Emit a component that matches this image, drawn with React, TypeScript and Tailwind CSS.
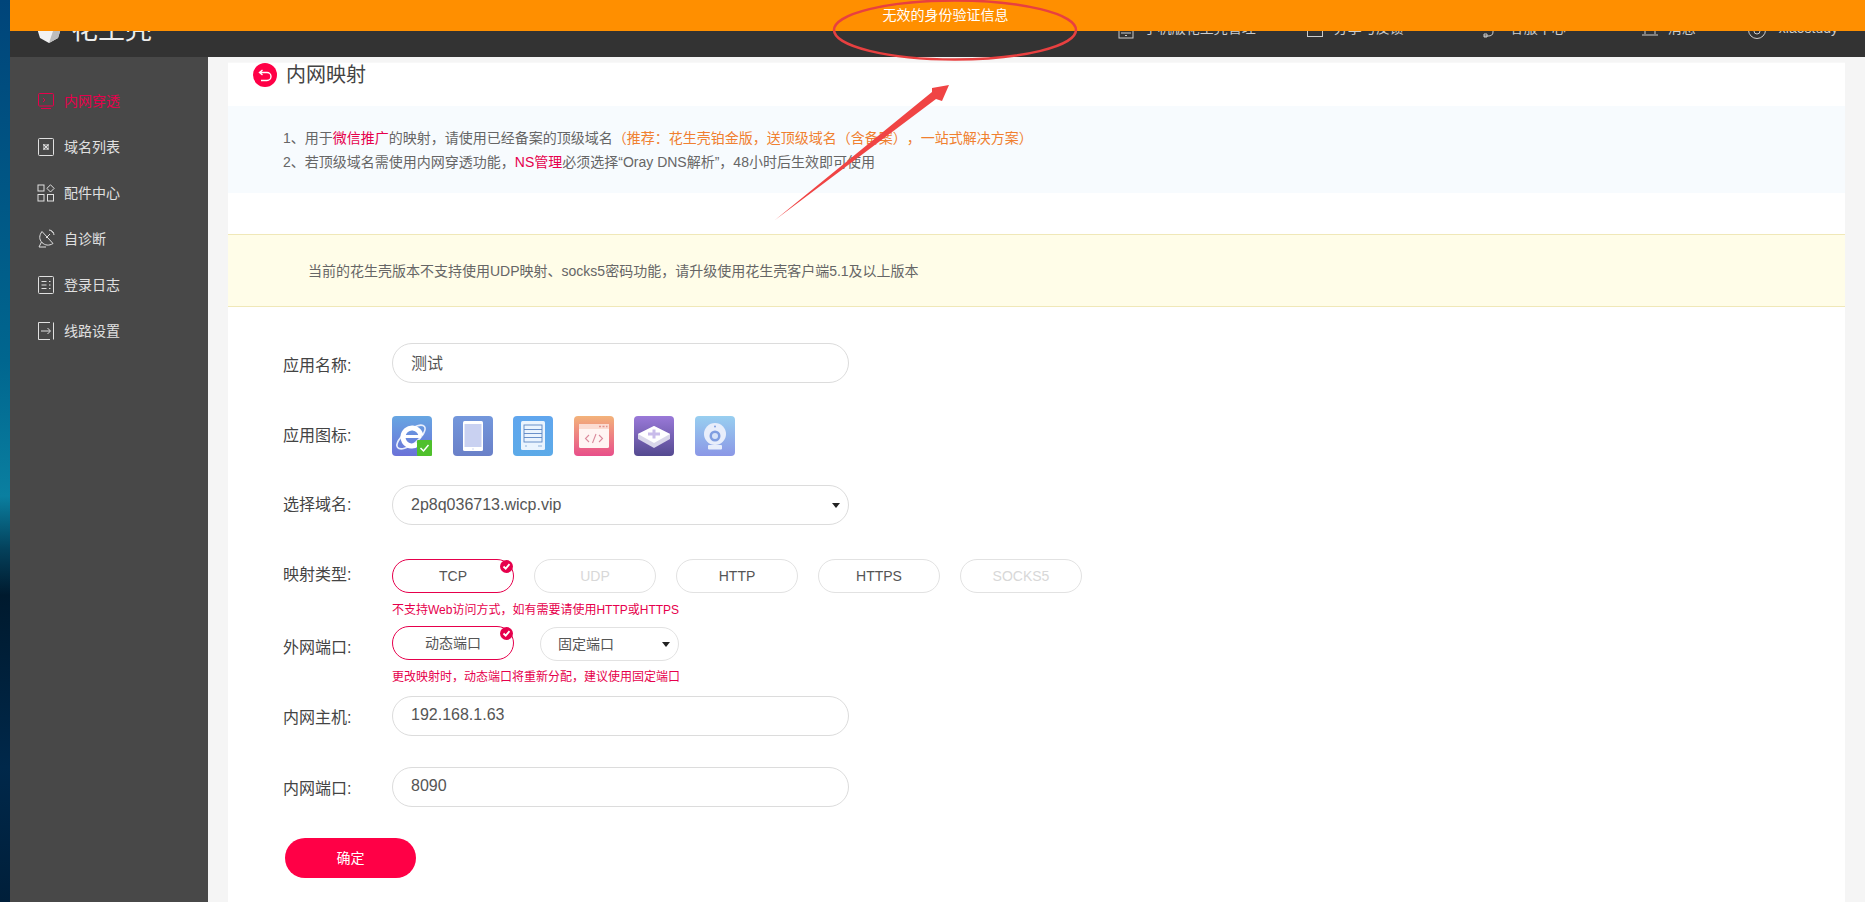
import type { ReactNode } from 'react';

const FONT = "font-['Liberation_Sans','Noto_Sans_CJK_SC',sans-serif]";

function MonitorIcon() {
  return (
    <svg width="18" height="18" viewBox="0 0 18 18" fill="none" stroke="currentColor" strokeWidth="1">
      <rect x="1.500" y="1.500" width="15" height="12.500" rx="1" />
      <path d="M4 16.500h10M6 6l2 2-2 2" />
    </svg>
  );
}
function DomainIcon() {
  return (
    <svg width="18" height="20" viewBox="0 0 18 20" fill="none" stroke="currentColor" strokeWidth="1">
      <rect x="1.500" y="1.500" width="15" height="17" rx="1" />
      <path d="M6.500 7.500l5 5M11.500 7.500l-5 5" strokeWidth="1.200" />
      <rect x="6.500" y="7.500" width="5" height="5" strokeWidth="0.500" />
    </svg>
  );
}
function PartsIcon() {
  return (
    <svg width="18" height="18" viewBox="0 0 18 18" fill="none" stroke="currentColor" strokeWidth="1">
      <rect x="1" y="1" width="6" height="6" />
      <path d="M13.500 0.800l3.600 3.600-3.600 3.600-3.600-3.600z" />
      <rect x="1" y="10.500" width="6" height="6.500" />
      <rect x="10.500" y="10.500" width="6" height="6.500" />
    </svg>
  );
}
function DishIcon() {
  return (
    <svg width="18" height="20" viewBox="0 0 18 20" fill="none" stroke="currentColor" strokeWidth="1">
      <path d="M5 2.500c-3 4-3 8 0 11s7 3.500 11 1z" />
      <path d="M9 9l4-4M14 1.500l2.500 2.500M12 1c2.500 0 5 2.500 5 5" />
      <path d="M4.500 13l-2.500 5h7" />
    </svg>
  );
}
function LogIcon() {
  return (
    <svg width="18" height="20" viewBox="0 0 18 20" fill="none" stroke="currentColor" strokeWidth="1">
      <rect x="1.500" y="1.500" width="15" height="17" rx="1" />
      <path d="M4.500 6.500h5M4.500 10h5M4.500 13.500h5M12 6.500h1.500M12 10h1.500M12 13.500h1.500" />
    </svg>
  );
}
function RouteIcon() {
  return (
    <svg width="18" height="20" viewBox="0 0 18 20" fill="none" stroke="currentColor" strokeWidth="1">
      <path d="M13 1.500H1.500v17H13" />
      <path d="M16.500 1.500v17M4 10h9M10.500 7l3 3-3 3" />
    </svg>
  );
}

function AppIconFrame({ id, from, to, children }: { id: string; from: string; to: string; children: ReactNode }) {
  return (
    <svg width="40" height="40" viewBox="0 0 40 40">
      <defs>
        <linearGradient id={id} x1="0" y1="0" x2="0" y2="1">
          <stop offset="0" stopColor={from} />
          <stop offset="1" stopColor={to} />
        </linearGradient>
      </defs>
      <rect width="40" height="40" rx="4" fill={`url(#${id})`} />
      {children}
    </svg>
  );
}

const appIcons = [
  <AppIconFrame key="ie" id="g1" from="#67a6e2" to="#6b72d8">
    <ellipse cx="19" cy="21" rx="17" ry="7" fill="none" stroke="#e8eefc" strokeWidth="1.600" transform="rotate(-38 19 21)" />
    <circle cx="20" cy="21" r="9" fill="none" stroke="#fff" strokeWidth="5" strokeDasharray="47 9.500" transform="rotate(50 20 21)" />
    <path d="M11 20.500h18" stroke="#fff" strokeWidth="3" />
    <rect x="25" y="24" width="15" height="16" rx="1" fill="#4fc02c" />
    <path d="M28.500 32l3 3 5-6" fill="none" stroke="#fff" strokeWidth="1.500" />
  </AppIconFrame>,
  <AppIconFrame key="pad" id="g2" from="#7397dc" to="#6a80c8">
    <rect x="10" y="5" width="20" height="30" rx="1.500" fill="#fff" />
    <rect x="11.500" y="8" width="17" height="23" fill="#c9d1f1" />
    <circle cx="20" cy="33" r="0.800" fill="#c9d1f1" />
  </AppIconFrame>,
  <AppIconFrame key="list" id="g3" from="#60a6ee" to="#5caae8">
    <rect x="8" y="5" width="24" height="29" rx="1.500" fill="#eaf4fe" />
    <rect x="11" y="9" width="18" height="17" fill="none" stroke="#5b86c4" strokeWidth="0.900" />
    <path d="M11 13.500h18M11 17.500h18M11 21.500h18" stroke="#5b86c4" strokeWidth="0.900" />
    <path d="M12 30h2M25 30h4" stroke="#8fb4dc" strokeWidth="1.200" />
  </AppIconFrame>,
  <AppIconFrame key="code" id="g4" from="#f3b37a" to="#e84f8a">
    <rect x="5" y="8" width="30" height="24" rx="1.500" fill="#fff5f3" />
    <rect x="5" y="8" width="30" height="5" fill="#fbdcd2" />
    <path d="M25 10.500h2M28.500 10.500h2M32 10.500h1.500" stroke="#e2928c" strokeWidth="1.400" />
    <path d="M15 19l-3.500 3.500 3.500 3.500M25 19l3.500 3.500-3.500 3.500M22 18l-3.500 9" fill="none" stroke="#da8a9c" strokeWidth="1.100" />
  </AppIconFrame>,
  <AppIconFrame key="box" id="g5" from="#9a79d9" to="#544a90">
    <path d="M20 10l16 8v5l-16 9-16-9v-5z" fill="#d9d6ea" />
    <path d="M20 10l16 8-16 9-16-9z" fill="#fff" />
    <path d="M20 13.500v9M14 18h12" stroke="#c9bcea" strokeWidth="3" />
  </AppIconFrame>,
  <AppIconFrame key="cam" id="g6" from="#98cff0" to="#8b97e6">
    <circle cx="20" cy="18" r="11" fill="#e8eefb" />
    <circle cx="20" cy="20" r="5.500" fill="#7f9de0" />
    <circle cx="20" cy="20" r="3" fill="#d6e2f8" />
    <circle cx="20" cy="10.500" r="1" fill="#7f9de0" />
    <rect x="13" y="29" width="14" height="4.500" rx="1" fill="#e8eefb" />
  </AppIconFrame>,
];

const menu = [
  { label: '内网穿透', icon: <MonitorIcon />, active: true },
  { label: '域名列表', icon: <DomainIcon /> },
  { label: '配件中心', icon: <PartsIcon /> },
  { label: '自诊断', icon: <DishIcon /> },
  { label: '登录日志', icon: <LogIcon /> },
  { label: '线路设置', icon: <RouteIcon /> },
];

function Label({ children, className = '' }: { children: ReactNode; className?: string }) {
  return <div className={`w-[109px] shrink-0 text-[16px] text-[#444] ${className}`}>{children}</div>;
}

function Field({ value }: { value: string }) {
  return (
    <input
      readOnly
      defaultValue={value}
      className="h-[40px] w-[457px] rounded-full border border-[#dcdcdc] bg-white px-[18px] pb-[2px] text-[16px] text-[#555] outline-none"
    />
  );
}

function Caret() {
  return <span className="h-0 w-0 border-x-[4px] border-t-[5px] border-x-transparent border-t-[#222]" />;
}

function Check() {
  return (
    <span className="absolute right-0 top-0 flex h-[13px] w-[13px] items-center justify-center rounded-full bg-[#e6004c]">
      <svg width="9" height="9" viewBox="0 0 9 9" fill="none" stroke="#fff" strokeWidth="1.800">
        <path d="M1.500 4.500l2.200 2.200 3.800-4.500" />
      </svg>
    </span>
  );
}

function Pill({ text, selected, disabled }: { text: string; selected?: boolean; disabled?: boolean }) {
  return (
    <div
      className={`relative flex h-[34px] w-[122px] items-center justify-center rounded-[17px] border text-[14px] ${
        selected ? 'border-[#e6004c]' : 'border-[#e2e2e2]'
      } ${disabled ? 'text-[#d8d8d8]' : 'text-[#555]'}`}
    >
      {text}
      {selected && <Check />}
    </div>
  );
}

export default function App() {
  return (
    <div className={`relative flex h-[902px] overflow-hidden bg-white [text-spacing-trim:space-all] ${FONT}`}>
      <div className="w-[10px] shrink-0 bg-[linear-gradient(180deg,#00457a_0%,#00668f_40%,#0a7fa0_55%,#04405a_61%,#001a2e_66%,#00284a_85%,#001f3a_100%)]" />

      <div className="flex min-w-0 flex-1 flex-col">
        <header className="flex h-[57px] shrink-0 items-center bg-[#333] pl-[26px] pr-[27px] text-[14px] text-[#ccc]">
          <svg width="26" height="26" viewBox="0 0 26 26" className="mt-[3px]">
            <path d="M0 8l13-8 13 8-4 13-9 5-9-5z" fill="#f2f2f2" />
            <path d="M13 26l9-5 4-13-9 6z" fill="#bdbdbd" />
          </svg>
          <span className="ml-[9px] mt-[3px] text-[27px] leading-none text-[#eee]">花生壳</span>
          <div className="ml-auto flex items-center gap-[7px]">
            <svg width="16" height="18" viewBox="0 0 16 18" fill="none" stroke="currentColor" strokeWidth="1" className="mt-[2px]">
              <rect x="1" y="1" width="14" height="16" />
              <path d="M3 12h10M7 14.500h2" />
            </svg>
            <span className="ml-[3px]">手机版花生壳管理</span>
          </div>
          <div className="ml-[51px] flex items-center gap-[11px]">
            <svg width="16" height="18" viewBox="0 0 16 18" fill="none" stroke="currentColor" strokeWidth="1" className="mt-[1px]">
              <rect x="0.500" y="1" width="15" height="15.500" />
            </svg>
            <span>分享与反馈</span>
          </div>
          <div className="ml-[79px] flex items-center gap-[15px]">
            <svg width="12" height="18" viewBox="0 0 12 18" fill="none" stroke="currentColor" strokeWidth="1" className="mt-[2px]">
              <path d="M10 1v10c0 3-2 4-5 4H1M1 13h3v3H1z" />
            </svg>
            <span>客服中心</span>
          </div>
          <div className="ml-[76px] flex items-center gap-[10px]">
            <svg width="16" height="18" viewBox="0 0 16 18" fill="none" stroke="currentColor" strokeWidth="1" className="mt-[1px]">
              <path d="M3 14V7a5 5 0 0 1 10 0v7M0 15h16" />
            </svg>
            <span>消息</span>
          </div>
          <div className="ml-[52px] flex items-center gap-[13px]">
            <svg width="18" height="18" viewBox="0 0 18 18" fill="none" stroke="currentColor" strokeWidth="1" className="mt-[3px]">
              <circle cx="9" cy="9" r="8.500" />
              <path d="M6 6v4a3 3 0 0 0 6 0V6" />
            </svg>
            <span>xiaostudy</span>
          </div>
        </header>

        <div className="flex min-h-0 flex-1">
          <aside className="w-[198px] shrink-0 bg-[#484848] pl-[27px] pt-[21px] text-[14px] text-[#e0e0e0]">
            {menu.map((item) => (
              <div key={item.label} className={`flex h-[46px] items-center ${item.active ? 'text-[#e6004c]' : ''}`}>
                <span className="flex w-[27px] shrink-0 justify-start">{item.icon}</span>
                {item.label}
              </div>
            ))}
          </aside>

          <div className="min-w-0 flex-1 bg-[#f5f5f5] px-[20px]">
            <main className="h-full bg-white">
              <div className="mt-[5px] h-[44px] border-t border-[#f8f8f8] bg-white">
                <div className="flex items-center gap-[9px] pl-[25px]">
                  <span className="flex h-[24px] w-[24px] items-center justify-center rounded-full bg-[#ff0046]">
                    <svg width="15" height="13" viewBox="0 0 15 13" fill="none" stroke="#fff" strokeWidth="1.400">
                      <path d="M4.500 1L1.500 3.500 4.500 6M2 3.500h7a3.800 3.800 0 0 1 0 8H3" />
                    </svg>
                  </span>
                  <span className="text-[20px] leading-none text-[#444]">内网映射</span>
                </div>
              </div>

              <div className="flex h-[87px] flex-col justify-center bg-[#f7fbfe] pl-[55px] text-[14px] leading-[24px] text-[#666]">
                <p>
                  1、用于<span className="text-[#e6004c]">微信推广</span>的映射，请使用已经备案的顶级域名
                  <span className="text-[#f08030]">（推荐：花生壳铂金版，送顶级域名（含备案），一站式解决方案）</span>
                </p>
                <p>
                  2、若顶级域名需使用内网穿透功能，<span className="text-[#e6004c]">NS管理</span>必须选择“Oray DNS解析”，48小时后生效即可使用
                </p>
              </div>

              <div className="mt-[41px] flex h-[73px] items-center border-y border-[#f0e8b8] bg-[#fffde8] pl-[80px] pt-[1px] text-[14px] text-[#666]">
                当前的花生壳版本不支持使用UDP映射、socks5密码功能，请升级使用花生壳客户端5.1及以上版本
              </div>

              <form className="pl-[55px]">
                <div className="mt-[36px] flex items-center">
                  <Label className="pt-[6px]">应用名称:</Label>
                  <Field value="测试" />
                </div>

                <div className="mt-[33px] flex items-center">
                  <Label>应用图标:</Label>
                  <div className="flex gap-[20.6px]">{appIcons}</div>
                </div>

                <div className="mt-[29px] flex items-center">
                  <Label>选择域名:</Label>
                  <div className="flex h-[40px] w-[457px] items-center justify-between rounded-full border border-[#dcdcdc] pl-[18px] pr-[8px] text-[16px] text-[#555]">
                    2p8q036713.wicp.vip
                    <Caret />
                  </div>
                </div>

                <div className="mt-[34px] flex items-center">
                  <Label className="pb-[2px]">映射类型:</Label>
                  <div className="flex gap-[20px]">
                    <Pill text="TCP" selected />
                    <Pill text="UDP" disabled />
                    <Pill text="HTTP" />
                    <Pill text="HTTPS" />
                    <Pill text="SOCKS5" disabled />
                  </div>
                </div>
                <p className="ml-[109px] mt-[9px] text-[12px] leading-[16px] text-[#e6004c]">不支持Web访问方式，如有需要请使用HTTP或HTTPS</p>

                <div className="mt-[8px] flex items-start">
                  <Label className="pt-[10px]">外网端口:</Label>
                  <Pill text="动态端口" selected />
                  <div className="ml-[26px] mt-[1px] flex h-[34px] w-[139px] items-center justify-between rounded-[17px] border border-[#e2e2e2] pl-[17px] pr-[8px] text-[14px] text-[#555]">
                    固定端口
                    <Caret />
                  </div>
                </div>
                <p className="ml-[109px] mt-[8px] text-[12px] leading-[16px] text-[#e6004c]">更改映射时，动态端口将重新分配，建议使用固定端口</p>

                <div className="mt-[11px] flex items-center">
                  <Label className="pt-[4px]">内网主机:</Label>
                  <Field value="192.168.1.63" />
                </div>

                <div className="mt-[31px] flex items-center">
                  <Label className="pt-[4px]">内网端口:</Label>
                  <Field value="8090" />
                </div>

                <button type="button" className="ml-[2px] mt-[31px] block h-[40px] w-[131px] rounded-[20px] bg-[#ff0046] text-[14px] text-white">
                  确定
                </button>
              </form>
            </main>
          </div>
        </div>
      </div>

      {/* invalid-auth toast */}
      <div className="absolute left-[10px] right-0 top-0 flex h-[31px] items-center justify-center bg-[#ff8f00] pl-[16px] text-[14px] text-white">
        无效的身份验证信息
      </div>

      {/* red markup drawn over the screenshot */}
      <svg width="1865" height="902" viewBox="0 0 1865 902" className="pointer-events-none absolute left-0 top-0">
        <ellipse cx="955" cy="30" rx="121" ry="29.500" fill="none" stroke="#e84040" strokeWidth="2.500" />
        <path d="M775 220L936 99 942 101 949 85 932 88 932 92Z" fill="#f04444" />
      </svg>
    </div>
  );
}
